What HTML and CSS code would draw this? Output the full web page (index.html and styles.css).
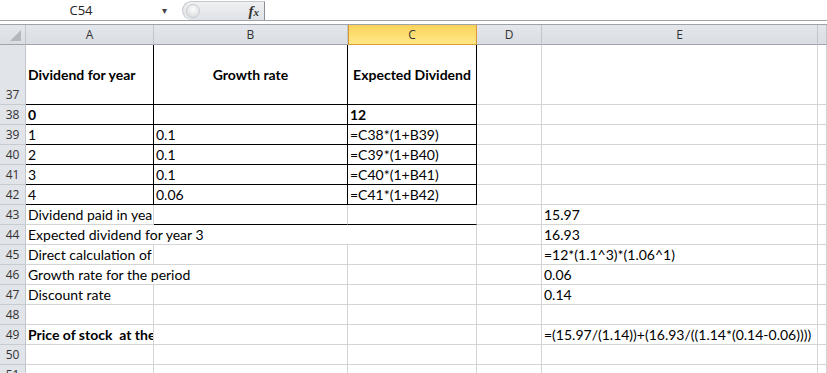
FILE: index.html
```html
<!DOCTYPE html>
<html lang="en">
<head>
    <meta charset="UTF-8" />
    <title>Dividend sheet</title>
    <link rel="stylesheet" href="styles.css">
</head>
<body>
    <div class="toolbar">
        <div class="namebox">C54</div>
        <div class="dropdown">&#9662;</div>
        <div class="fxzone">
            <span class="knob"></span>
            <span class="fx">f<span class="fx-x">x</span></span>
        </div>
        <div class="formula"></div>
    </div>

    <div class="sheet">
        <div class="row head">
            <div class="corner"><span class="tri"></span></div>
            <div class="colhead">A</div>
            <div class="colhead">B</div>
            <div class="colhead active">C</div>
            <div class="colhead">D</div>
            <div class="colhead">E</div>
            <div class="colhead"></div>
        </div>

        <div class="row tall">
            <div class="rh">37</div>
            <div class="c box mid bold">Dividend for year</div>
            <div class="c box mid bold center">Growth rate</div>
            <div class="c box mid bold center">Expected Dividend</div>
            <div class="c"></div>
            <div class="c"></div>
            <div class="c"></div>
        </div>
        <div class="row">
            <div class="rh">38</div>
            <div class="c box bold">0</div>
            <div class="c box"></div>
            <div class="c box bold">12</div>
            <div class="c"></div>
            <div class="c"></div>
            <div class="c"></div>
        </div>
        <div class="row">
            <div class="rh">39</div>
            <div class="c box">1</div>
            <div class="c box">0.1</div>
            <div class="c box">=C38*(1+B39)</div>
            <div class="c"></div>
            <div class="c"></div>
            <div class="c"></div>
        </div>
        <div class="row">
            <div class="rh">40</div>
            <div class="c box">2</div>
            <div class="c box">0.1</div>
            <div class="c box">=C39*(1+B40)</div>
            <div class="c"></div>
            <div class="c"></div>
            <div class="c"></div>
        </div>
        <div class="row">
            <div class="rh">41</div>
            <div class="c box">3</div>
            <div class="c box">0.1</div>
            <div class="c box">=C40*(1+B41)</div>
            <div class="c"></div>
            <div class="c"></div>
            <div class="c"></div>
        </div>
        <div class="row">
            <div class="rh">42</div>
            <div class="c box">4</div>
            <div class="c box">0.06</div>
            <div class="c box">=C41*(1+B42)</div>
            <div class="c"></div>
            <div class="c"></div>
            <div class="c"></div>
        </div>
        <div class="row">
            <div class="rh">43</div>
            <div class="c">Dividend paid in yea</div>
            <div class="c under"></div>
            <div class="c under"></div>
            <div class="c"></div>
            <div class="c">15.97</div>
            <div class="c"></div>
        </div>
        <div class="row">
            <div class="rh">44</div>
            <div class="c span-3">Expected dividend for year 3</div>
            <div class="c"></div>
            <div class="c">16.93</div>
            <div class="c"></div>
        </div>
        <div class="row">
            <div class="rh">45</div>
            <div class="c">Direct calculation of</div>
            <div class="c"></div>
            <div class="c"></div>
            <div class="c"></div>
            <div class="c">=12*(1.1^3)*(1.06^1)</div>
            <div class="c"></div>
        </div>
        <div class="row">
            <div class="rh">46</div>
            <div class="c span-2">Growth rate for the period</div>
            <div class="c"></div>
            <div class="c"></div>
            <div class="c">0.06</div>
            <div class="c"></div>
        </div>
        <div class="row">
            <div class="rh">47</div>
            <div class="c">Discount rate</div>
            <div class="c"></div>
            <div class="c"></div>
            <div class="c"></div>
            <div class="c">0.14</div>
            <div class="c"></div>
        </div>
        <div class="row">
            <div class="rh">48</div>
            <div class="c"></div>
            <div class="c"></div>
            <div class="c"></div>
            <div class="c"></div>
            <div class="c"></div>
            <div class="c"></div>
        </div>
        <div class="row">
            <div class="rh">49</div>
            <div class="c bold">Price of stock&nbsp; at the</div>
            <div class="c"></div>
            <div class="c"></div>
            <div class="c"></div>
            <div class="c">=(15.97/(1.14))+(16.93/((1.14*(0.14-0.06))))</div>
            <div class="c"></div>
        </div>
        <div class="row">
            <div class="rh">50</div>
            <div class="c"></div>
            <div class="c"></div>
            <div class="c"></div>
            <div class="c"></div>
            <div class="c"></div>
            <div class="c"></div>
        </div>
        <div class="row">
            <div class="rh">51</div>
            <div class="c"></div>
            <div class="c"></div>
            <div class="c"></div>
            <div class="c"></div>
            <div class="c"></div>
            <div class="c"></div>
        </div>
    </div>
</body>
</html>
```

FILE: styles.css
```css
body {
    margin: 0;
    background: #fff;
    font-family: 'Lato', 'Open Sans', sans-serif;
    color: #000;
    overflow: hidden;
}

/* name box + formula bar */
.toolbar {
    display: flex;
    height: 20px;
    border-bottom: 1px solid #9ea3aa;
    margin-bottom: 3px;
    font-family: 'Open Sans', sans-serif;
    font-size: 13px;
}

.namebox {
    width: 162px;
    text-align: center;
    line-height: 20px;
    color: #222;
}

.dropdown {
    width: 20px;
    font-size: 10px;
    line-height: 20px;
    color: #444;
}

.fxzone {
    width: 83px;
    height: 19px;
    margin-top: 1px;
    background: linear-gradient(#eef0f2, #dfe2e6);
    border: 1px solid #c4c8ce;
    border-bottom: none;
    border-right: 1px solid #8a8f96;
    border-radius: 10px 0 0 10px;
    display: flex;
    align-items: center;
    justify-content: space-between;
    padding: 0 5px 0 3px;
    box-sizing: border-box;
}

.knob {
    width: 12px;
    height: 12px;
    border-radius: 50%;
    background: radial-gradient(circle at 50% 35%, #fdfdfd, #d2d5d9);
    border: 1px solid #c9ccd1;
}

.fx {
    font-family: 'Liberation Serif', serif;
    font-style: italic;
    font-weight: bold;
    font-size: 15px;
    color: #333;
}

.fx-x {
    font-size: 11px;
}

.formula {
    flex: 1;
}

/* grid */
.sheet {
    border-top: 1px solid #9ea3aa;
}

.row {
    display: grid;
    grid-template-columns: 26px 128px 194px 129px 65px 276px 1fr;
    height: 20px;
}

.row.tall {
    height: 60px;
}

.row > div {
    box-sizing: border-box;
    border-right: 1px solid #d4d4d4;
    border-bottom: 1px solid #d4d4d4;
    white-space: nowrap;
    overflow: hidden;
}

.corner,
.colhead {
    background: linear-gradient(#e3e6ea, #dadee3);
}

.row.head > div {
    border-right-color: #c2c6cc;
    border-bottom-color: #9ea4ac;
}

.corner {
    display: flex;
    justify-content: flex-end;
    align-items: flex-end;
    padding: 0 4px 3px 0;
}

.tri {
    width: 11px;
    height: 11px;
    background: #b3b8bf;
    clip-path: polygon(100% 0, 100% 100%, 0 100%);
}

.colhead {
    text-align: center;
    font-family: 'Open Sans', sans-serif;
    font-size: 12px;
    line-height: 19px;
    color: #333;
}

.row.head > .colhead.active {
    background: linear-gradient(#f9d25c, #ffe887);
    border-right-color: #d99a34;
    border-bottom-color: #d99a34;
    box-shadow: inset 1px 0 0 #d99a34;
}

.rh {
    background: #e1e4e8;
    border-right-color: #c2c6cc !important;
    border-bottom-color: #c8ccd1 !important;
    font-family: 'Open Sans', sans-serif;
    font-size: 12px;
    color: #333;
    text-align: center;
    display: flex;
    align-items: flex-end;
    justify-content: center;
    padding-bottom: 1px;
}

.c {
    font-size: 14px;
    line-height: 19px;
    padding: 0 2px;
    display: flex;
    align-items: flex-end;
}

.c.bold {
    font-weight: bold;
}

.c.center {
    justify-content: center;
}

.c.mid {
    align-items: center;
}

.row > .c.box {
    border-right-color: #000;
    border-bottom-color: #000;
}

.row > .c.under {
    border-bottom-color: #000;
}

.span-2 {
    grid-column: span 2;
}

.span-3 {
    grid-column: span 3;
}
```
